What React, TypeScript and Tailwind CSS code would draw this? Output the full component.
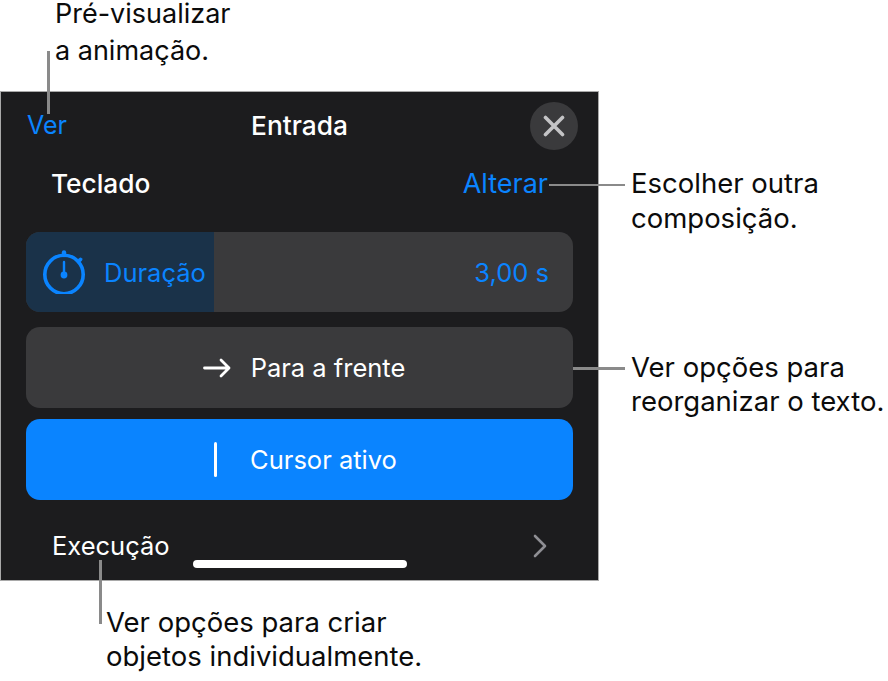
import React from "react";

function Stopwatch() {
  return (
    <svg width="44" height="44" viewBox="0 0 44 44" fill="none" className="shrink-0">
      <circle cx="22" cy="24.5" r="19.2" stroke="#0a84ff" strokeWidth="3.6" />
      <line x1="22" y1="2.5" x2="22" y2="5" stroke="#0a84ff" strokeWidth="4.4" strokeLinecap="round" />
      <line x1="38.5" y1="9.5" x2="36.5" y2="11.5" stroke="#0a84ff" strokeWidth="3.8" strokeLinecap="round" />
      <line x1="22" y1="12" x2="22" y2="24" stroke="#0a84ff" strokeWidth="2.4" strokeLinecap="round" />
      <circle cx="22" cy="25" r="3.4" fill="#0a84ff" />
    </svg>
  );
}

export default function App() {
  return (
    <div className="relative w-[888px] h-[681px] bg-white overflow-hidden font-['Inter',sans-serif] text-[#0b0b0b] text-[27.5px] leading-[35px]">
      <div className="h-[91px] pl-[55px] flex flex-col text-[27px]">
        <p className="leading-[27px] whitespace-nowrap">Pré-visualizar</p>
        <p className="mt-[6px] whitespace-nowrap">a animação.</p>
      </div>

      <div className="flex h-[490px]">
        <div className="relative w-[599px] shrink-0 bg-[#1c1c1e] border border-[#a9a9a9] text-white flex flex-col text-[25.5px]">
          <div className="flex items-center justify-between h-[64px] pl-[26px] pr-[20px] pt-[3px]">
            <span className="text-[#0a84ff] w-[42px] whitespace-nowrap text-[25px]">Ver</span>
            <span className="font-[550] text-[26.3px]">Entrada</span>
            <span className="flex items-center justify-center w-[48px] h-[48px] rounded-full bg-[#3a3a3c]">
              <svg width="22" height="22" viewBox="0 0 22 22" fill="none">
                <path d="M2.5 2.5 L19.5 19.5 M19.5 2.5 L2.5 19.5" stroke="#c4c4c6" strokeWidth="3.6" strokeLinecap="round" />
              </svg>
            </span>
          </div>
          <div className="flex items-center justify-between h-[54px] pl-[50px] pr-[50px]">
            <span className="font-[550] text-[26.3px]">Teclado</span>
            <span className="text-[#0a84ff] text-[27px]">Alterar</span>
          </div>
          <div className="mx-[25px] mt-[22px] h-[80px] rounded-[14px] bg-[#3a3a3c] overflow-hidden flex items-center justify-between text-[#0a84ff]">
            <div className="w-[188px] h-full bg-[#1a3249] flex items-center pl-[16px] gap-[18px]">
              <Stopwatch />
              <span>Duração</span>
            </div>
            <span className="pr-[24px]">3,00 s</span>
          </div>
          <div className="mx-[25px] mt-[15px] h-[81px] rounded-[14px] bg-[#3a3a3c] flex items-center justify-center gap-[20px] pl-[9px]">
            <svg width="28" height="20" viewBox="0 0 28 20" fill="none">
              <path d="M1.5 10 H26 M18 2 L26 10 L18 18" stroke="white" strokeWidth="2.8" strokeLinecap="round" strokeLinejoin="round" />
            </svg>
            <span>Para a frente</span>
          </div>
          <div className="mx-[25px] mt-[11px] h-[81px] rounded-[14px] bg-[#0a84ff] flex items-center justify-center gap-[33px] pl-[12px]">
            <span className="w-[3px] h-[35px] bg-white rounded-full" />
            <span>Cursor ativo</span>
          </div>
          <div className="flex items-center justify-between pl-[51px] pr-[50px] mt-[28px]">
            <span>Execução</span>
            <svg width="16" height="26" viewBox="0 0 16 26" fill="none">
              <path d="M3 3 L13 13 L3 23" stroke="#8e8e93" strokeWidth="2.6" strokeLinecap="round" strokeLinejoin="round" />
            </svg>
          </div>
          <span className="absolute left-[192px] bottom-[12px] w-[214px] h-[8px] rounded-full bg-white" />
        </div>

        <div className="pl-[32px] flex flex-col">
          <div className="mt-[75px]">
            <p className="whitespace-nowrap">Escolher outra</p>
            <p className="whitespace-nowrap">composição.</p>
          </div>
          <div className="mt-[114px]">
            <p className="whitespace-nowrap">Ver opções para</p>
            <p className="-mt-[1px] whitespace-nowrap">reorganizar o texto.</p>
          </div>
        </div>
      </div>

      <div className="pl-[106px] pt-[24px]">
        <p className="whitespace-nowrap">Ver opções para criar</p>
        <p className="-mt-[1px] whitespace-nowrap">objetos individualmente.</p>
      </div>

      <span className="absolute left-[47px] top-[51px] w-[2.5px] h-[63px] bg-[#8a8a8a]" />
      <span className="absolute left-[549px] top-[183.5px] w-[76px] h-[2.5px] bg-[#8a8a8a]" />
      <span className="absolute left-[573px] top-[367px] w-[52px] h-[2.5px] bg-[#8a8a8a]" />
      <span className="absolute left-[99px] top-[560px] w-[2.5px] h-[64px] bg-[#8a8a8a]" />
    </div>
  );
}
